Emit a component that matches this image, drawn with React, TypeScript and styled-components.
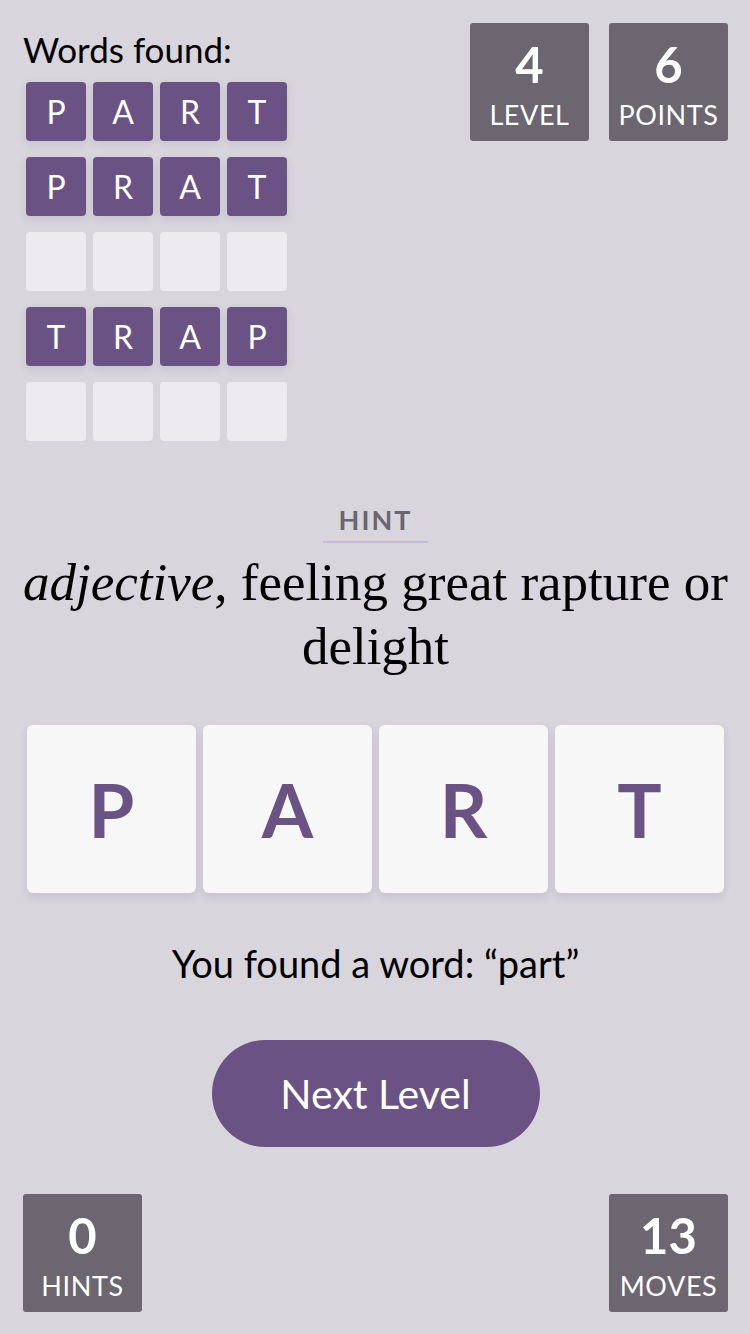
import React from 'react';
import styled, { createGlobalStyle } from 'styled-components';

const GlobalStyle = createGlobalStyle`
  html, body {
    margin: 0;
    padding: 0;
    background: #d8d5dc;
  }
  * {
    box-sizing: border-box;
  }
`;

const Page = styled.div`
  min-height: 1334px;
  display: flex;
  flex-direction: column;
  padding: 23px 22px 22px 23px;
  font-family: Lato, 'Open Sans', sans-serif;
  color: #000;
`;

const TopRow = styled.div`
  display: flex;
  justify-content: space-between;
  align-items: flex-start;
`;

const FoundColumn = styled.div`
  display: flex;
  flex-direction: column;
`;

const FoundTitle = styled.div`
  font-size: 35px;
  line-height: 44px;
  height: 59px;
  padding-top: 4px;
`;

const FoundGrid = styled.div`
  display: grid;
  grid-template-columns: repeat(4, 60px);
  grid-auto-rows: 59px;
  column-gap: 7px;
  row-gap: 16px;
  margin-left: 3px;
`;

const SmallTile = styled.div<{ filled: boolean }>`
  display: flex;
  align-items: center;
  justify-content: center;
  border-radius: 4px;
  background: ${({ filled }) => (filled ? '#6b5285' : '#edebf0')};
  color: #fff;
  font-size: 32px;
  box-shadow: ${({ filled }) => (filled ? '0 3px 8px rgba(80, 60, 100, 0.12)' : 'none')};
`;

const StatGroup = styled.div`
  display: flex;
  gap: 20px;
`;

const StatBox = styled.div`
  width: 119px;
  height: 118px;
  border-radius: 3px;
  background: #6b6670;
  color: #fff;
  display: flex;
  flex-direction: column;
  align-items: center;
  padding-top: 12px;
`;

const StatValue = styled.div`
  font-size: 49px;
  font-weight: 700;
  line-height: 58px;
`;

const StatLabel = styled.div`
  font-size: 27px;
  line-height: 34px;
  margin-top: 5px;
  letter-spacing: 0.6px;
`;

const HintSection = styled.section`
  display: flex;
  flex-direction: column;
  align-items: center;
  margin-top: 62px;
`;

const HintLabel = styled.div`
  font-size: 27px;
  font-weight: 700;
  color: #6b6670;
  letter-spacing: 2px;
  line-height: 34px;
  padding: 0 16px 4px;
  border-bottom: 2px solid #c9b8d8;
`;

const HintText = styled.p`
  margin: 7px -10px 0;
  font-family: 'Liberation Serif', 'DejaVu Serif', serif;
  font-size: 53px;
  line-height: 64px;
  text-align: center;

  em {
    font-style: italic;
  }
`;

const BigTileRow = styled.div`
  display: grid;
  grid-template-columns: repeat(4, 1fr);
  gap: 7px;
  margin: 47px 4px 0 4px;
`;

const BigTile = styled.div`
  height: 168px;
  border-radius: 6px;
  background: #f7f7f7;
  display: flex;
  align-items: center;
  justify-content: center;
  color: #6b5285;
  font-size: 74px;
  font-weight: 700;
  box-shadow: 0 4px 10px rgba(80, 60, 100, 0.12);
`;

const Message = styled.div`
  margin-top: 47px;
  text-align: center;
  font-size: 38px;
  line-height: 46px;
`;

const NextButton = styled.button`
  align-self: center;
  margin-top: 54px;
  width: 328px;
  height: 107px;
  border: none;
  border-radius: 54px;
  background: #6b5285;
  color: #fff;
  font-family: Lato, 'Open Sans', sans-serif;
  font-size: 41px;
  cursor: pointer;
`;

const BottomRow = styled.div`
  margin-top: auto;
  display: flex;
  justify-content: space-between;
`;

const words: (string | null)[] = ['PART', 'PRAT', null, 'TRAP', null];

function Stat({ value, label }: { value: number; label: string }) {
  return (
    <StatBox>
      <StatValue>{value}</StatValue>
      <StatLabel>{label}</StatLabel>
    </StatBox>
  );
}

export default function App() {
  return (
    <>
      <GlobalStyle />
      <Page>
        <TopRow>
          <FoundColumn>
            <FoundTitle>Words found:</FoundTitle>
            <FoundGrid>
              {words.map((word, row) =>
                [0, 1, 2, 3].map((i) => (
                  <SmallTile key={`${row}-${i}`} filled={!!word}>
                    {word ? word[i] : ''}
                  </SmallTile>
                ))
              )}
            </FoundGrid>
          </FoundColumn>
          <StatGroup>
            <Stat value={4} label="LEVEL" />
            <Stat value={6} label="POINTS" />
          </StatGroup>
        </TopRow>

        <HintSection>
          <HintLabel>HINT</HintLabel>
          <HintText>
            <em>adjective</em>, feeling great rapture or delight
          </HintText>
        </HintSection>

        <BigTileRow>
          {'PART'.split('').map((letter, i) => (
            <BigTile key={i}>{letter}</BigTile>
          ))}
        </BigTileRow>

        <Message>You found a word: “part”</Message>
        <NextButton>Next Level</NextButton>

        <BottomRow>
          <Stat value={0} label="HINTS" />
          <Stat value={13} label="MOVES" />
        </BottomRow>
      </Page>
    </>
  );
}
